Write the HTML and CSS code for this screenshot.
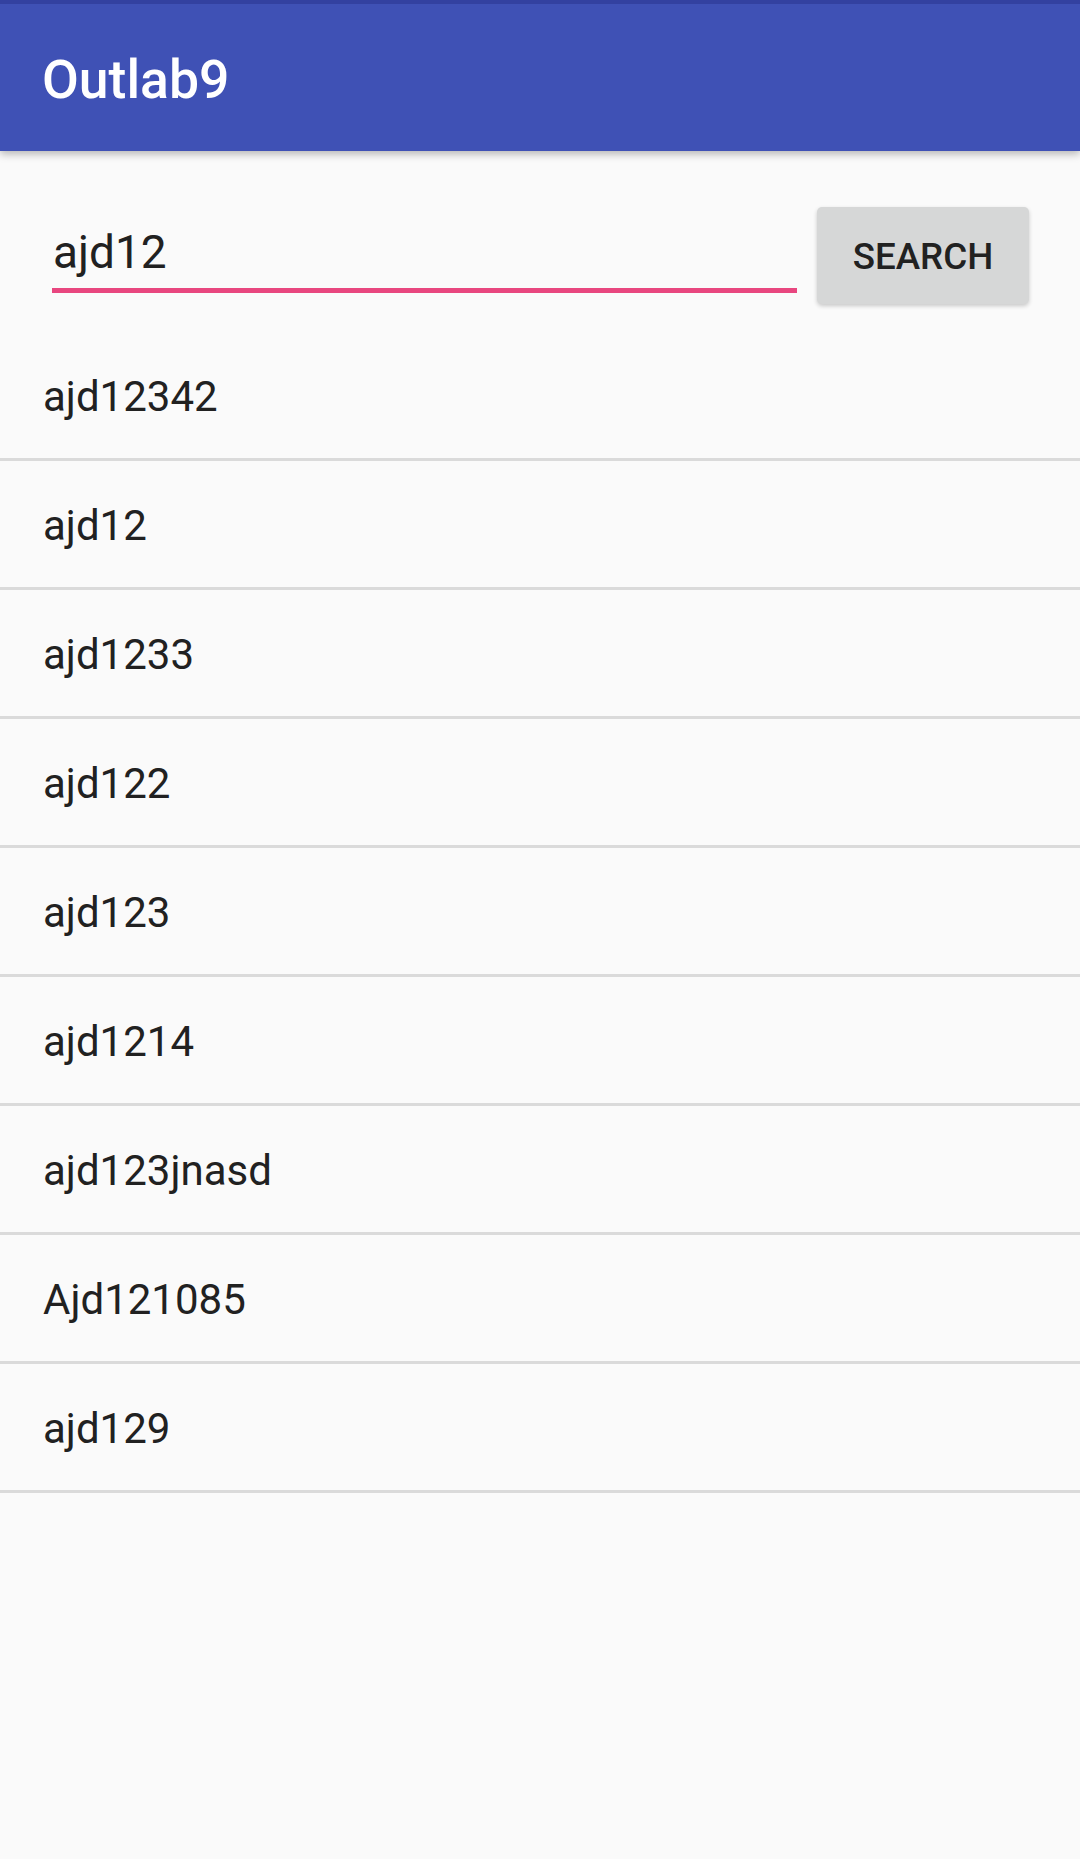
FILE: index.html
```html
<!DOCTYPE html>
<html lang="en">
<head>
<meta charset="utf-8">
<title>Outlab9</title>
<link rel="stylesheet" href="styles.css">
</head>
<body>
<header class="toolbar">
  <h1 class="title">Outlab9</h1>
</header>
<main>
  <section class="search-row">
    <input class="search-input" type="text" value="ajd12" aria-label="Search">
    <button class="search-btn" type="button">SEARCH</button>
  </section>
  <ul class="results">
    <li class="row">ajd12342</li>
    <li class="row">ajd12</li>
    <li class="row">ajd1233</li>
    <li class="row">ajd122</li>
    <li class="row">ajd123</li>
    <li class="row">ajd1214</li>
    <li class="row">ajd123jnasd</li>
    <li class="row">Ajd121085</li>
    <li class="row">ajd129</li>
  </ul>
</main>
</body>
</html>
```
FILE: styles.css
```css
* { box-sizing: border-box; }
html, body {
  margin: 0;
  padding: 0;
  background: #FAFAFA;
  font-family: Roboto, "Liberation Sans", sans-serif;
  color: #212121;
}
body {
  width: 1080px;
  min-height: 1859px;
}
.toolbar {
  position: relative;
  z-index: 2;
  height: 151px;
  background: #3F51B5;
  border-top: 4px solid #3341A0;
  display: flex;
  align-items: center;
  padding: 6px 0 0 42px;
  box-shadow: 0 3px 8px rgba(0, 0, 0, 0.28);
}
.title {
  margin: 0;
  font-size: 53.5px;
  font-weight: 500;
  color: #FFFFFF;
  line-height: 1.172;
}
.search-row {
  display: flex;
  align-items: flex-start;
  gap: 20px;
  padding: 56px 51px 28px 52px;
}
.search-input {
  flex: 1;
  min-width: 0;
  height: 86px;
  margin: 0;
  padding: 18px 0 9px 1px;
  border: none;
  border-bottom: 5px solid #E8467F;
  background: transparent;
  font-family: Roboto, "Liberation Sans", sans-serif;
  font-size: 46px;
  color: #212121;
  outline: none;
}
.search-btn {
  width: 212px;
  height: 97px;
  margin: 0;
  padding: 2px 0 0 0;
  border: none;
  border-radius: 5px;
  background: #D6D7D7;
  box-shadow: 0 2px 4px rgba(0, 0, 0, 0.2);
  font-family: Roboto, "Liberation Sans", sans-serif;
  font-size: 36.75px;
  font-weight: 500;
  color: #212121;
  display: flex;
  align-items: center;
  justify-content: center;
}
.results {
  list-style: none;
  margin: 0;
  padding: 0;
}
.row {
  height: 129px;
  padding: 4px 0 0 43px;
  border-bottom: 3px solid #DADADA;
  display: flex;
  align-items: center;
  font-size: 42px;
  line-height: 1.172;
  color: #212121;
}
```
